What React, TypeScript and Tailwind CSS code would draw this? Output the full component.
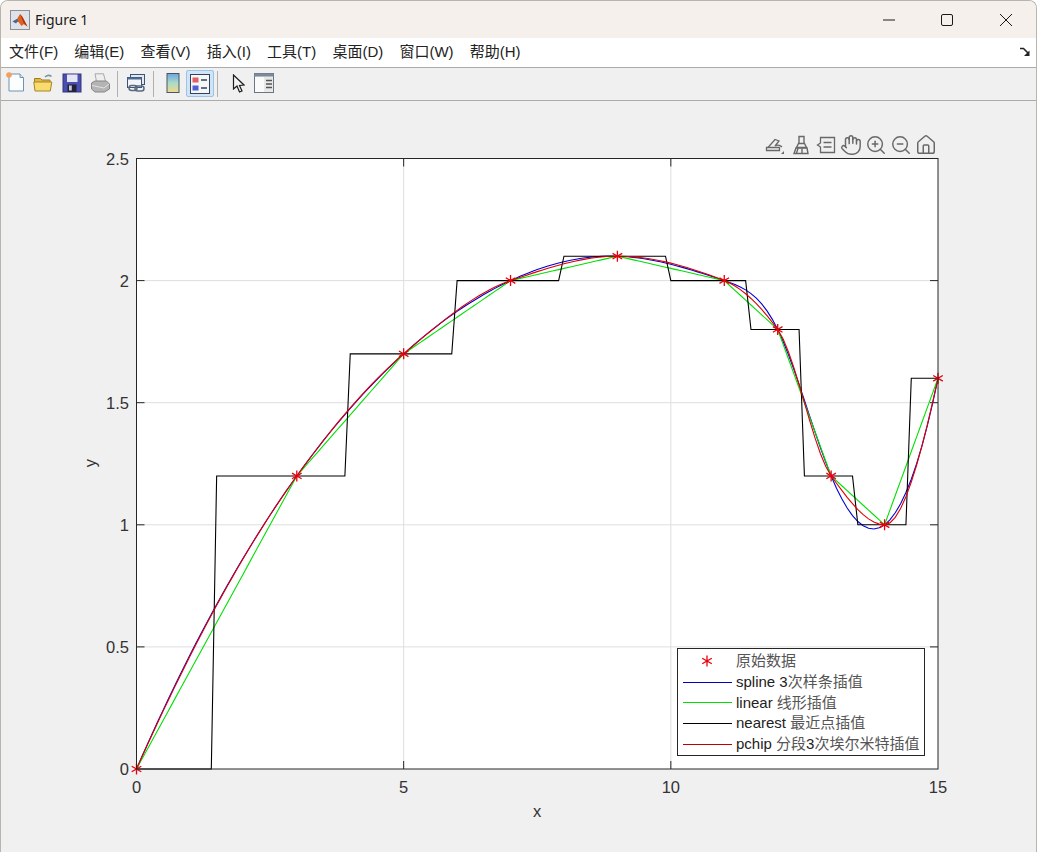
import { Hand, House, ZoomIn, ZoomOut } from 'lucide-react'

const xs = [0, 3, 5, 7, 9, 11, 12, 13, 14, 15]
const ys = [0, 1.2, 1.7, 2, 2.1, 2, 1.8, 1.2, 1, 1.6]

const px = (x: number) => 136.5 + (x * 801.5) / 15
const py = (y: number) => 769 - (y * 610.5) / 2.5

const samples = Array.from({ length: 151 }, (_, i) => i / 10)

function solve(a: number[][], b: number[]) {
  const n = b.length
  for (let i = 0; i < n; i++) {
    let p = i
    for (let r = i + 1; r < n; r++) if (Math.abs(a[r][i]) > Math.abs(a[p][i])) p = r
    ;[a[i], a[p]] = [a[p], a[i]]
    ;[b[i], b[p]] = [b[p], b[i]]
    for (let r = i + 1; r < n; r++) {
      const f = a[r][i] / a[i][i]
      for (let c = i; c < n; c++) a[r][c] -= f * a[i][c]
      b[r] -= f * b[i]
    }
  }
  const out = new Array(n).fill(0)
  for (let i = n - 1; i >= 0; i--) {
    let s = b[i]
    for (let c = i + 1; c < n; c++) s -= a[i][c] * out[c]
    out[i] = s / a[i][i]
  }
  return out as number[]
}

const segment = (x: number) => {
  let k = 0
  while (k < xs.length - 2 && x >= xs[k + 1]) k++
  return k
}

const n = xs.length
const h = xs.slice(1).map((x, i) => x - xs[i])
const del = ys.slice(1).map((y, i) => (y - ys[i]) / h[i])

// 3次样条，not-a-knot 边界
function makeSpline() {
  const a = Array.from({ length: n }, () => new Array(n).fill(0) as number[])
  const b = new Array(n).fill(0) as number[]
  a[0][0] = h[1]
  a[0][1] = -(h[0] + h[1])
  a[0][2] = h[0]
  a[n - 1][n - 3] = h[n - 2]
  a[n - 1][n - 2] = -(h[n - 3] + h[n - 2])
  a[n - 1][n - 1] = h[n - 3]
  for (let i = 1; i < n - 1; i++) {
    a[i][i - 1] = h[i - 1]
    a[i][i] = 2 * (h[i - 1] + h[i])
    a[i][i + 1] = h[i]
    b[i] = 6 * (del[i] - del[i - 1])
  }
  const m = solve(a, b)
  return (x: number) => {
    const k = segment(x)
    const l = xs[k + 1] - x
    const r = x - xs[k]
    return (
      (m[k] * l ** 3 + m[k + 1] * r ** 3) / (6 * h[k]) +
      (ys[k] / h[k] - (m[k] * h[k]) / 6) * l +
      (ys[k + 1] / h[k] - (m[k + 1] * h[k]) / 6) * r
    )
  }
}

function pchipEnd(h0: number, h1: number, d0: number, d1: number) {
  let d = ((2 * h0 + h1) * d0 - h0 * d1) / (h0 + h1)
  if (Math.sign(d) !== Math.sign(d0)) d = 0
  else if (Math.sign(d0) !== Math.sign(d1) && Math.abs(d) > 3 * Math.abs(d0)) d = 3 * d0
  return d
}

function makePchip() {
  const d = new Array(n).fill(0) as number[]
  for (let k = 1; k < n - 1; k++) {
    if (del[k - 1] * del[k] > 0) {
      const w1 = 2 * h[k] + h[k - 1]
      const w2 = h[k] + 2 * h[k - 1]
      d[k] = (w1 + w2) / (w1 / del[k - 1] + w2 / del[k])
    }
  }
  d[0] = pchipEnd(h[0], h[1], del[0], del[1])
  d[n - 1] = pchipEnd(h[n - 2], h[n - 3], del[n - 2], del[n - 3])
  return (x: number) => {
    const k = segment(x)
    const t = (x - xs[k]) / h[k]
    return (
      (2 * t ** 3 - 3 * t ** 2 + 1) * ys[k] +
      (t ** 3 - 2 * t ** 2 + t) * h[k] * d[k] +
      (-2 * t ** 3 + 3 * t ** 2) * ys[k + 1] +
      (t ** 3 - t ** 2) * h[k] * d[k + 1]
    )
  }
}

const linear = (x: number) => {
  const k = segment(x)
  return ys[k] + del[k] * (x - xs[k])
}

const nearest = (x: number) => {
  const k = segment(x)
  return x >= (xs[k] + xs[k + 1]) / 2 ? ys[k + 1] : ys[k]
}

const toPoints = (f: (x: number) => number) =>
  samples.map((x) => `${px(x).toFixed(2)},${py(f(x)).toFixed(2)}`).join(' ')

const curves = [
  { color: '#0000d8', fn: makeSpline() },
  { color: '#00e000', fn: linear },
  { color: '#000000', fn: nearest },
  { color: '#e00000', fn: makePchip() },
]

function Star({ x, y }: { x: number; y: number }) {
  return (
    <path
      d={`M${x} ${y - 5.5}V${y + 5.5}M${x - 4.8} ${y - 2.8}L${x + 4.8} ${y + 2.8}M${x - 4.8} ${y + 2.8}L${x + 4.8} ${y - 2.8}`}
      stroke="#e8000b"
      strokeWidth="1.3"
      fill="none"
    />
  )
}

function Plot() {
  const xTicks = [0, 5, 10, 15]
  const yTicks = [0, 0.5, 1, 1.5, 2, 2.5]
  const left = px(0)
  const right = px(15)
  const top = py(2.5)
  const bottom = py(0)
  return (
    <svg viewBox="0 101 1037 751" className="block w-[1037px] h-[751px]" style={{ fontFamily: '"Liberation Sans", sans-serif' }}>
      <rect x={left} y={top} width={right - left} height={bottom - top} fill="#ffffff" />
      {xTicks.slice(1, -1).map((t) => (
        <path key={t} d={`M${px(t)} ${top}V${bottom}`} stroke="#dedede" />
      ))}
      {yTicks.slice(1, -1).map((t) => (
        <path key={t} d={`M${left} ${py(t)}H${right}`} stroke="#dedede" />
      ))}
      {xTicks.slice(1, -1).map((t) => (
        <path key={t} d={`M${px(t)} ${bottom}v-8M${px(t)} ${top}v8`} stroke="#262626" />
      ))}
      {yTicks.slice(1, -1).map((t) => (
        <path key={t} d={`M${left} ${py(t)}h8M${right} ${py(t)}h-8`} stroke="#262626" />
      ))}
      {curves.map((c) => (
        <polyline key={c.color} points={toPoints(c.fn)} fill="none" stroke={c.color} strokeWidth="1.1" />
      ))}
      {xs.map((x, i) => (
        <Star key={x} x={px(x)} y={py(ys[i])} />
      ))}
      <rect x={left} y={top} width={right - left} height={bottom - top} fill="none" stroke="#262626" />
      {xTicks.map((t) => (
        <text key={t} x={px(t)} y="793" textAnchor="middle" fontSize="16.5" fill="#333">
          {t}
        </text>
      ))}
      {yTicks.map((t) => (
        <text key={t} x="129" y={py(t) + 6} textAnchor="end" fontSize="16.5" fill="#333">
          {t}
        </text>
      ))}
      <text x="537" y="817" textAnchor="middle" fontSize="16.5" fill="#333">
        x
      </text>
      <text transform="translate(96 463) rotate(-90)" textAnchor="middle" fontSize="16.5" fill="#333">
        y
      </text>
    </svg>
  )
}

function MatlabLogo() {
  return (
    <svg viewBox="0 0 20 20" className="w-5 h-5">
      <rect x="0.5" y="0.5" width="19" height="19" fill="#dfe3e8" stroke="#8a8f96" />
      <path d="M2.5 11.5 7 9l3-5 2.5 3 5 9.5-3.5-2.500-2.500 2-3-4z" fill="#e2621b" />
      <path d="M2.5 11.5 7 9l1.500 1.500L6 13.500z" fill="#3a6ea5" />
      <path d="M10 4l2.500 3 5 9.500-3.500-2.500z" fill="#b5321a" />
    </svg>
  )
}

function ToolIcons() {
  return (
    <>
      {/* 新建 */}
      <svg viewBox="0 0 20 20" className="w-5 h-5 absolute left-[5px] top-[4px]">
        <path d="M3 2h11l3.500 3.500V19H3z" fill="#fbfdff" stroke="#6f93b5" />
        <path d="M14 2v3.500h3.500" fill="#dfe8f0" stroke="#6f93b5" />
        <circle cx="3" cy="3" r="2.800" fill="#f0a060" />
      </svg>
      {/* 打开 */}
      <svg viewBox="0 0 20 20" className="w-5 h-5 absolute left-[32px] top-[5px]">
        <path d="M12 4q3.500-3 6.500-.5" fill="none" stroke="#6e9aa0" strokeWidth="1.600" />
        <path d="M1.500 5.500h6l1.500 1.500h8v4h-15.500z" fill="#e0b848" stroke="#a07c20" />
        <path d="M.800 9h18l-1.500 9H2z" fill="#f8dc70" stroke="#a88420" />
      </svg>
      {/* 保存 */}
      <svg viewBox="0 0 20 20" className="w-5 h-5 absolute left-[61px] top-[5px]">
        <rect x="1" y="1" width="18" height="18" fill="#4a4fb0" stroke="#34347c" />
        <rect x="5" y="1.500" width="10.500" height="7.500" fill="#e4e6f6" />
        <rect x="5.500" y="11.500" width="9" height="7.500" fill="#22223a" />
        <rect x="7" y="12.500" width="2.800" height="5" fill="#c8c8d8" />
      </svg>
      {/* 打印 */}
      <svg viewBox="0 0 20 20" className="w-5 h-5 absolute left-[89px] top-[5px]">
        <path d="M5 .800h8.500l2 7.700h-9z" fill="#eeeeee" stroke="#a8a8a8" />
        <path d="M1.500 10 5 8h11.500l3 3v5l-5 3H5l-3.500-3z" fill="#b4b4b4" stroke="#868686" />
        <path d="M2 12.500 14 15l5-4" fill="none" stroke="#e2e2e2" />
      </svg>
      {/* 链接绘图 */}
      <svg viewBox="0 0 20 20" className="w-5 h-5 absolute left-[125px] top-[5px]">
        <rect x="4.500" y="1.500" width="14" height="10" fill="#e4e8ee" stroke="#3c5478" />
        <rect x="1.500" y="4.500" width="14" height="10" fill="#f2f4f8" stroke="#3c5478" />
        <rect x="1.500" y="4.500" width="14" height="2" fill="#4c6c98" />
        <rect x="3" y="12.500" width="8" height="5" rx="2.500" fill="none" stroke="#5a6a80" strokeWidth="1.500" />
        <rect x="9" y="13" width="9" height="5" rx="2.500" fill="none" stroke="#5a6a80" strokeWidth="1.500" />
      </svg>
      {/* 颜色栏 */}
      <svg viewBox="0 0 14 20" className="w-[14px] h-5 absolute left-[165px] top-[5px]">
        <defs>
          <linearGradient id="cbar" x1="0" y1="0" x2="0" y2="1">
            <stop offset="0" stopColor="#6fa4e0" />
            <stop offset="0.5" stopColor="#a8dcc8" />
            <stop offset="1" stopColor="#f4d888" />
          </linearGradient>
        </defs>
        <rect x="1" y="0.500" width="12" height="19" fill="url(#cbar)" stroke="#4a5564" />
      </svg>
      {/* 图例，当前选中 */}
      <div className="absolute left-[185px] top-[2px] w-[28px] h-[27px] rounded-[2px] bg-[#cfe4f7] border border-[#9cc4e6]" />
      <svg viewBox="0 0 20 20" className="w-5 h-5 absolute left-[189px] top-[6px]">
        <rect x="0.500" y="0.500" width="19" height="19" fill="#f4f6f8" stroke="#33415a" />
        <rect x="2.500" y="3.500" width="6" height="5" fill="#e06060" />
        <rect x="2.500" y="11.500" width="6" height="5" fill="#5060d0" />
        <path d="M11 6h6M11 14h6" stroke="#33415a" strokeWidth="1.500" />
      </svg>
      {/* 箭头 */}
      <svg viewBox="0 0 14 20" className="w-[14px] h-5 absolute left-[230px] top-[6px]">
        <path d="M2.500 1v14l3.500-3 2.500 6 2.500-1-2.500-5.500 4.500-.5z" fill="#f4f4f4" stroke="#1c1c1c" strokeWidth="1.200" />
      </svg>
      {/* 属性面板 */}
      <svg viewBox="0 0 20 20" className="w-5 h-5 absolute left-[253px] top-[5px]">
        <rect x="0.500" y="0.500" width="19" height="19" fill="#e8e8e8" stroke="#6a7684" />
        <rect x="0.500" y="0.500" width="19" height="3" fill="#7a8a9a" />
        <rect x="1" y="4" width="9" height="15" fill="#fafafa" />
        <path d="M12 7.500h6M12 11h6M12 14.500h6" stroke="#555" strokeWidth="1.400" />
      </svg>
    </>
  )
}

function AxesToolbar() {
  return (
    <div className="absolute left-[765px] top-[33px] flex items-center text-[#686868]">
      <svg viewBox="0 0 20 20" className="w-5 h-5 mr-[6px]" fill="none" stroke="currentColor" strokeWidth="1.300">
        <path d="M3 12.500 10 4.500l4 1.500-4 5c2-1 5-1 7 1" />
        <path d="M1.500 12.500h13v3h-13z" />
        <path d="M19 16v3h-3z" fill="currentColor" stroke="none" />
      </svg>
      <svg viewBox="0 0 20 20" className="w-5 h-5 mr-[5px]" fill="none" stroke="currentColor" strokeWidth="1.400">
        <path d="M8 1.500h5v7h-5zM7.500 8.500h6l2 4h-10z" />
        <path d="M5 13h11l1 5.500H3z" />
        <path d="M7 13.500 5.500 18M11 13.500v5" />
      </svg>
      <svg viewBox="0 0 20 20" className="w-5 h-5 mr-[4px]" fill="none" stroke="currentColor" strokeWidth="1.300">
        <path d="M4.500 2.500h14v15h-14V12l-3-2 3-2z" />
        <path d="M7.500 7.500h8M7.500 12h8" />
      </svg>
      <Hand className="w-[22px] h-[22px] mr-[3px]" strokeWidth={1.6} />
      <ZoomIn className="w-[22px] h-[22px] mr-[3px]" strokeWidth={1.6} />
      <ZoomOut className="w-[22px] h-[22px] mr-[3px]" strokeWidth={1.6} />
      <House className="w-[22px] h-[22px]" strokeWidth={1.6} />
    </div>
  )
}

const legendRows = [
  { color: '#0000c0', label: 'spline 3', cjk: '次样条插值' },
  { color: '#00e000', label: 'linear ', cjk: '线形插值' },
  { color: '#000000', label: 'nearest ', cjk: '最近点插值' },
]

function Legend() {
  return (
    <div className="absolute left-[677px] top-[547px] w-[248px] h-[108px] border border-[#262626] bg-white pt-[2px] text-[15px] leading-[20.800px] text-[#222]">
      <div className="flex items-center h-[20.800px] text-[#555]">
        <svg viewBox="0 0 14 14" className="w-[14px] h-[14px] ml-[22px] mr-[22px]">
          <path d="M7 1.500v11M2.200 4.200l9.600 5.600M2.200 9.800l9.600-5.600" stroke="#e8000b" strokeWidth="1.300" fill="none" />
        </svg>
        <span>原始数据</span>
      </div>
      {legendRows.map((row) => (
        <div key={row.color} className="flex items-center h-[20.800px]">
          <div className="w-[49px] h-px ml-[5px] mr-[4px]" style={{ background: row.color }} />
          <span className="whitespace-pre">{row.label}</span>
          <span className="text-[#555]">{row.cjk}</span>
        </div>
      ))}
      <div className="flex items-center h-[20.800px]">
        <div className="w-[49px] h-px ml-[5px] mr-[4px] bg-[#c00000]" />
        <span className="whitespace-pre">pchip </span>
        <span className="text-[#555]">分段</span>
        <span>3</span>
        <span className="text-[#555]">次埃尔米特插值</span>
      </div>
    </div>
  )
}

export default function App() {
  const menus = ['文件(F)', '编辑(E)', '查看(V)', '插入(I)', '工具(T)', '桌面(D)', '窗口(W)', '帮助(H)']
  return (
    <div className="w-[1037px] h-[852px] overflow-hidden bg-[#f0f0f0] rounded-t-[8px] border-t border-x border-[#b8b4b0] font-['Liberation_Sans','Noto_Sans_CJK_SC',sans-serif] flex flex-col box-border">
      {/* 标题栏 */}
      <header className="h-[37px] shrink-0 bg-[#f6f0ec] flex items-center pl-[9px]">
        <MatlabLogo />
        <span className="ml-[5px] text-[14px] text-[#1a1a1a] font-['Noto_Sans',sans-serif]">Figure 1</span>
        <div className="ml-auto flex items-center text-[#1a1a1a]">
          <svg viewBox="0 0 12 12" className="w-3 h-3 mr-[46px]">
            <path d="M0 6h12" stroke="currentColor" />
          </svg>
          <svg viewBox="0 0 12 12" className="w-3 h-3 mr-[47px]">
            <rect x="0.500" y="0.500" width="11" height="11" rx="1.500" fill="none" stroke="currentColor" />
          </svg>
          <svg viewBox="0 0 12 12" className="w-3 h-3 mr-[24px]">
            <path d="M0 0l12 12M12 0L0 12" stroke="currentColor" />
          </svg>
        </div>
      </header>

      {/* 菜单栏 */}
      <nav className="h-[30px] shrink-0 bg-white border-b border-[#ababab] flex items-center pl-[8px] text-[15px] text-[#222] relative">
        {menus.map((m) => (
          <span key={m} className="mr-[16.200px] whitespace-nowrap">
            {m}
          </span>
        ))}
        <svg viewBox="0 0 10 10" className="absolute right-[6px] top-[9px] w-[10px] h-[10px]">
          <path d="M0 1.500h3.500L8 6" fill="none" stroke="#222" strokeWidth="1.500" />
          <path d="M9.500 3.500V9H4z" fill="#222" />
        </svg>
      </nav>

      {/* 工具栏 */}
      <div className="h-[33px] shrink-0 bg-[#f0f0f0] border-b border-[#ababab] relative">
        <ToolIcons />
        <div className="absolute left-[116px] top-[3px] w-px h-[26px] bg-[#b0b0b0]" />
        <div className="absolute left-[152px] top-[3px] w-px h-[26px] bg-[#b0b0b0]" />
        <div className="absolute left-[216px] top-[3px] w-px h-[26px] bg-[#b0b0b0]" />
      </div>

      {/* 绘图区 */}
      <main className="relative flex-1 -mx-px">
        <Plot />
        <AxesToolbar />
        <Legend />
      </main>
    </div>
  )
}
